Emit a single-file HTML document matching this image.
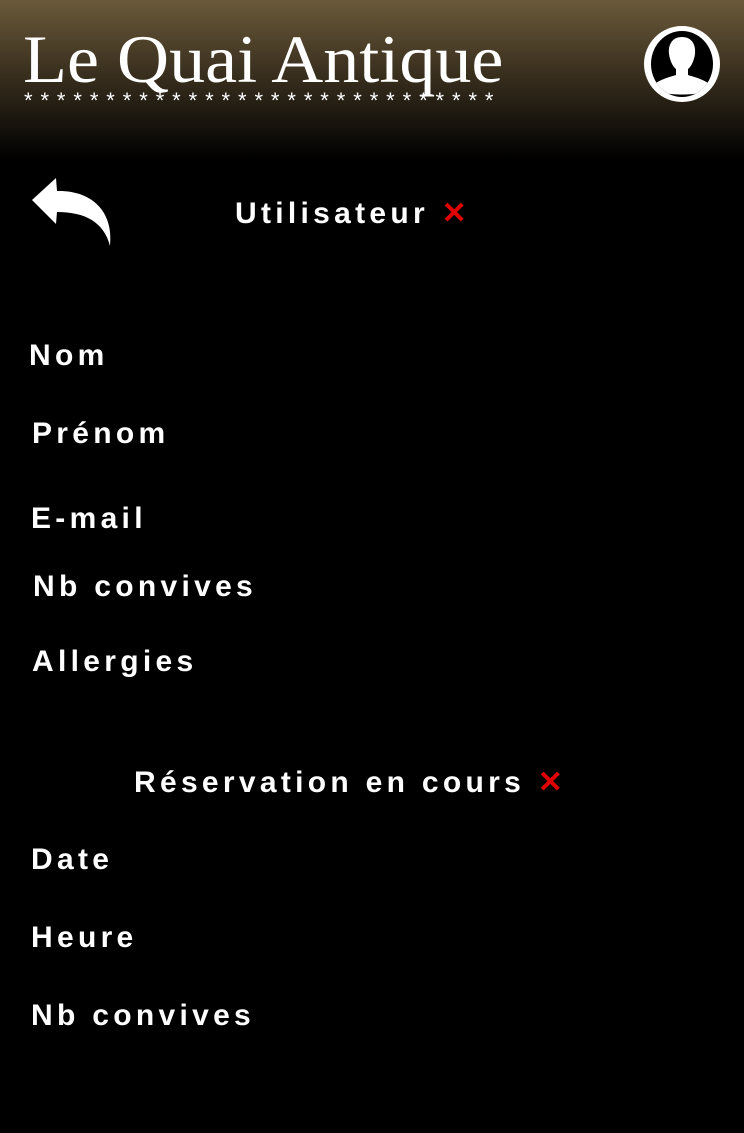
<!DOCTYPE html>
<html><head><meta charset="utf-8"><style>
body{margin:0;width:744px;height:1133px;background:#000;overflow:hidden;font-family:"Liberation Sans",sans-serif;color:#fff;position:relative}
.hdr{position:absolute;left:0;top:0;width:744px;height:160px;background:linear-gradient(#6b5a3a 0%,#3a301f 45%,#000 100%)}
.t{position:absolute;left:23px;top:20px;font-family:"Liberation Serif",serif;font-size:68px;white-space:nowrap;transform-origin:0 0;transform:scaleX(1.06)}
.st{position:absolute;left:24px;top:88px;font-family:"Liberation Sans",sans-serif;font-size:22px;letter-spacing:7.9px;white-space:nowrap}
.l{position:absolute;font-weight:bold;font-size:30px;letter-spacing:4.3px;white-space:nowrap}
.x{color:#e00000}
</style></head><body>
<div class="hdr"></div>
<div class="t">Le Quai Antique</div>
<div class="st">*****************************</div>
<svg style="position:absolute;left:642px;top:25px" width="80" height="80" viewBox="0 0 80 80">
<defs><clipPath id="c"><ellipse cx="40" cy="39" rx="31" ry="33"/></clipPath></defs>
<ellipse cx="40" cy="39" rx="38" ry="38" fill="#fff"/>
<ellipse cx="40" cy="39" rx="31" ry="33" fill="#000"/>
<g clip-path="url(#c)">
<path d="M40 12c-10 0-14 8-13 17 1 7 4 13 7 15v6c-10 3-20 6-24 12 0 10 60 10 60 0-4-6-14-9-24-12v-6c3-2 6-8 7-15 1-9-3-17-13-17z" fill="#fff"/>
</g>
</svg>
<svg style="position:absolute;left:30px;top:176px" width="84" height="72" viewBox="0 0 84 72">
<path d="M2 24 L26 2 L27 15 C60 14 84 34 80 70 C74 46 55 36 27 36 L26 48 Z" fill="#fff"/>
</svg>
<div class="l" style="left:235px;top:196px">Utilisateur <span class="x">✕</span></div>
<div class="l" style="left:29px;top:339px">Nom</div>
<div class="l" style="left:32px;top:417px">Prénom</div>
<div class="l" style="left:31px;top:502px">E-mail</div>
<div class="l" style="left:33px;top:570px">Nb convives</div>
<div class="l" style="left:32px;top:645px">Allergies</div>
<div class="l" style="left:134px;top:765px">Réservation en cours <span class="x">✕</span></div>
<div class="l" style="left:31px;top:843px">Date</div>
<div class="l" style="left:31px;top:921px">Heure</div>
<div class="l" style="left:31px;top:999px">Nb convives</div>
</body></html>
